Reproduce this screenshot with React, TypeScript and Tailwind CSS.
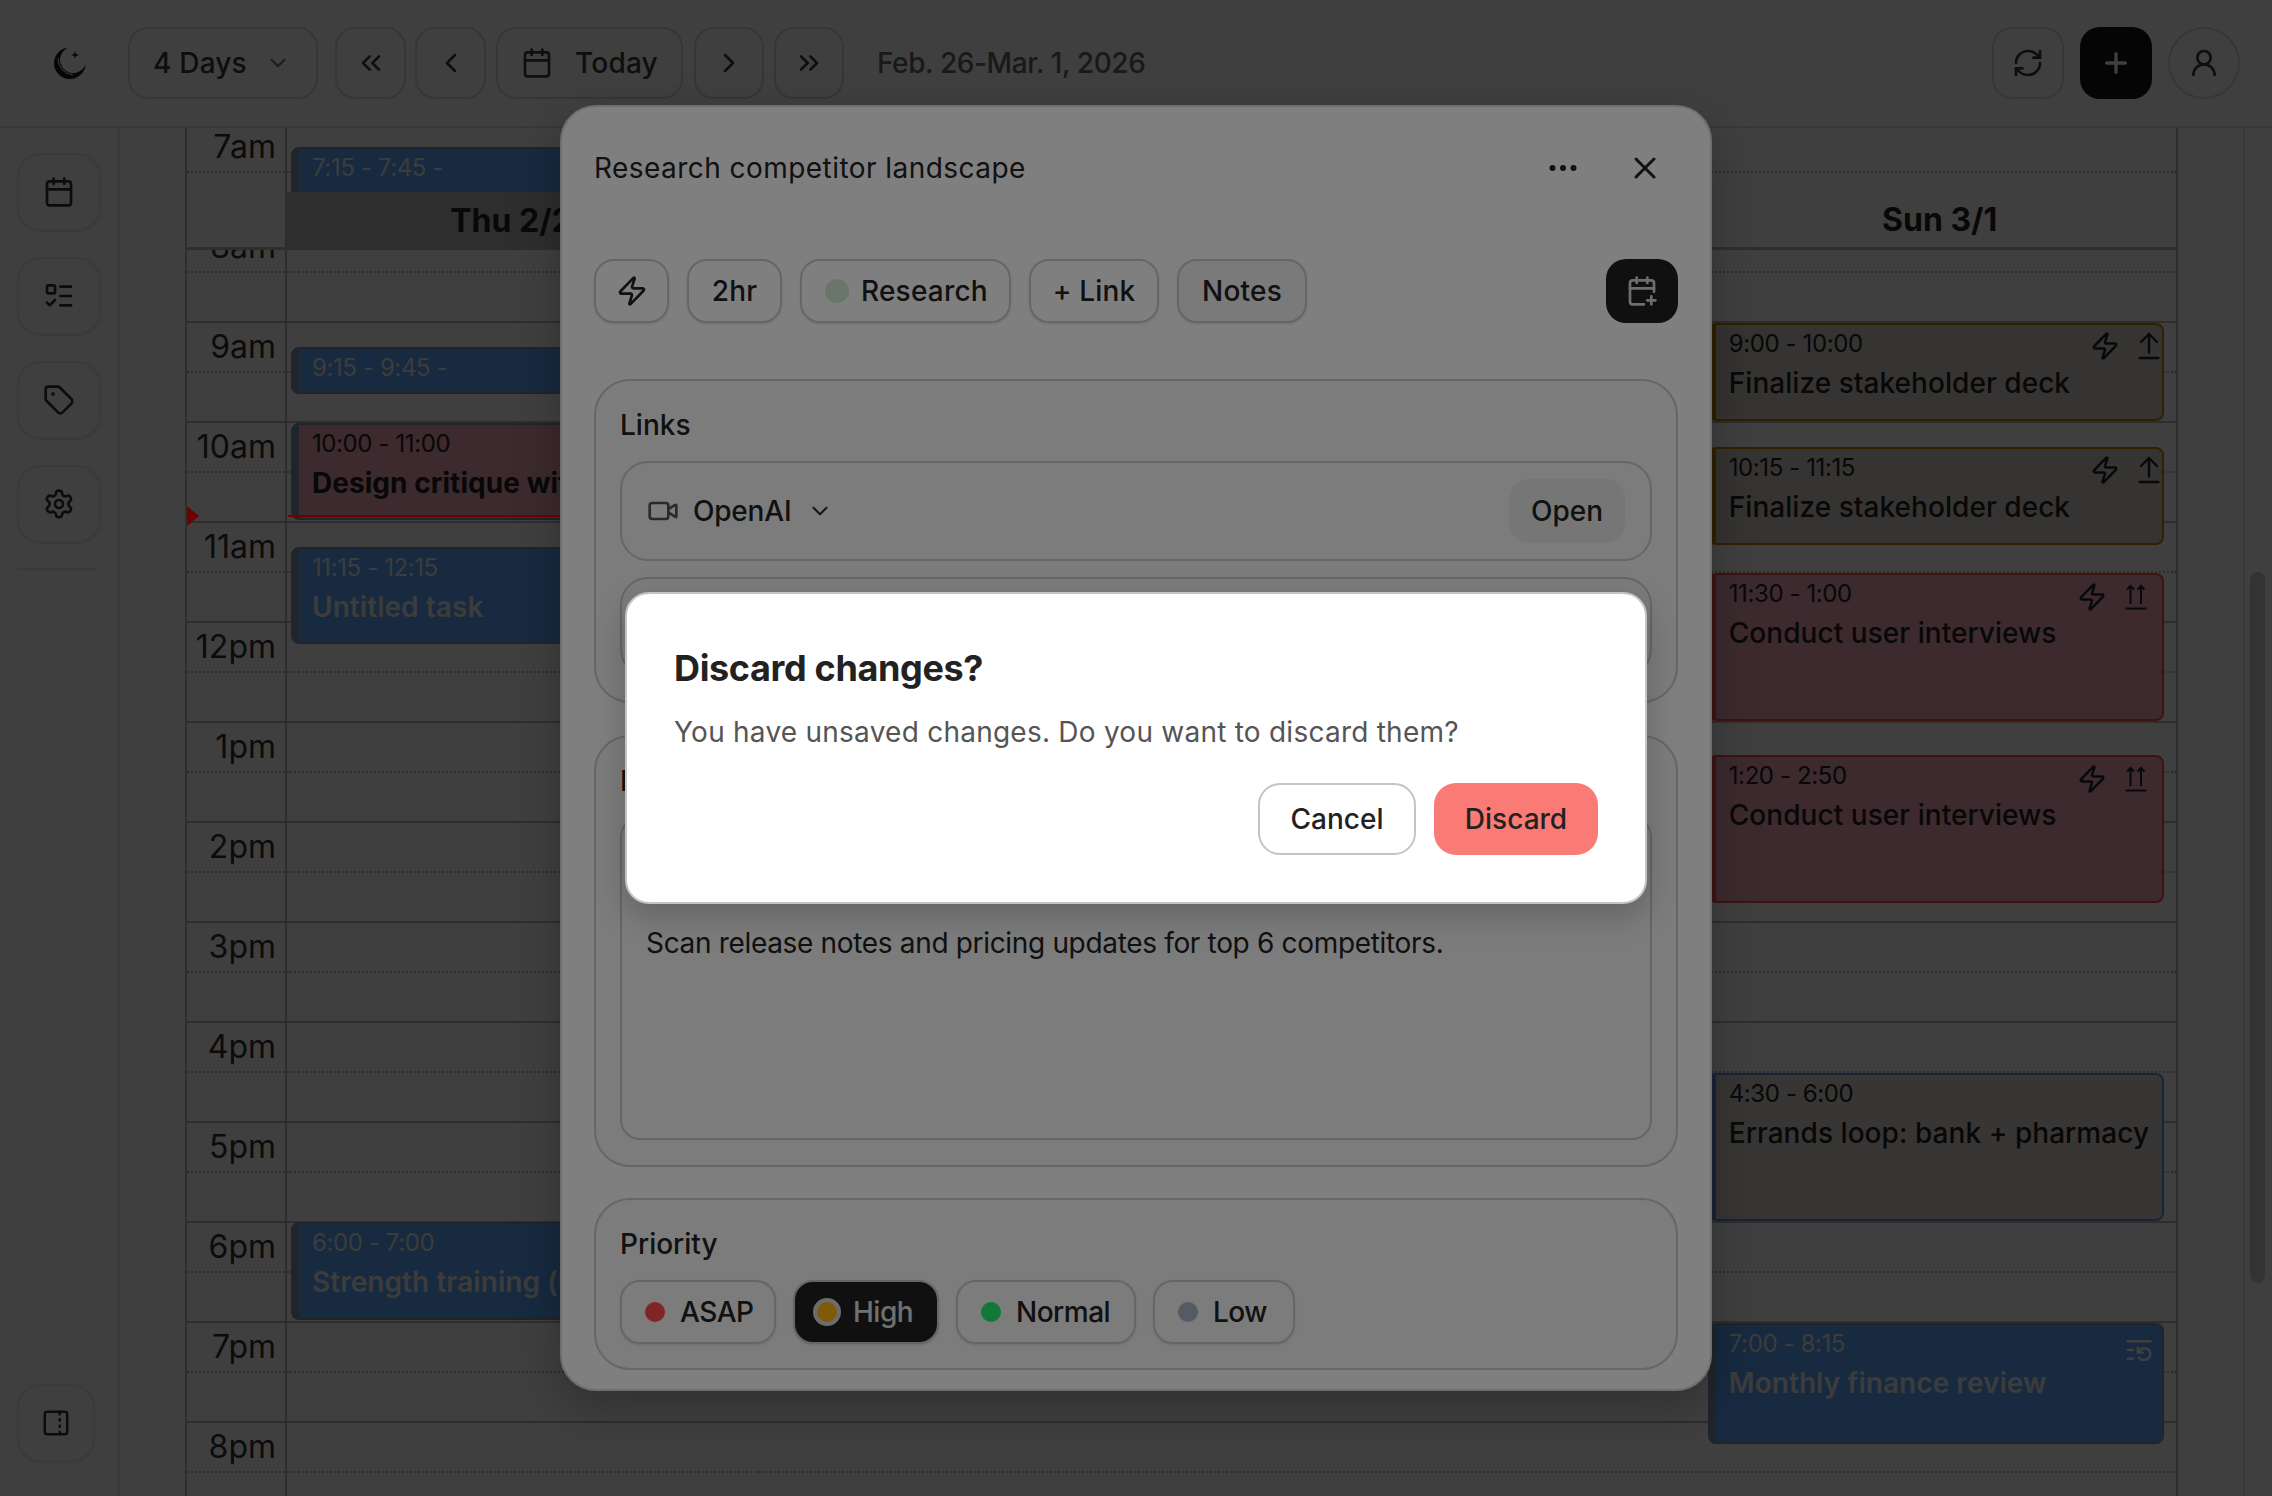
import {
  Calendar,
  CalendarPlus,
  ChevronDown,
  ChevronLeft,
  ChevronRight,
  ChevronsLeft,
  ChevronsRight,
  Ellipsis,
  ListRestart,
  ListTodo,
  PanelRightDashed,
  Plus,
  RefreshCw,
  Settings,
  Tag,
  UserRound,
  Video,
  X,
  Zap,
  ArrowUpFromLine,
} from 'lucide-react';
import type { ReactNode } from 'react';

const HOURS = ['7am', '8am', '9am', '10am', '11am', '12pm', '1pm', '2pm', '3pm', '4pm', '5pm', '6pm', '7pm', '8pm'];

type Kind = 'blue' | 'rose' | 'amber' | 'red' | 'plain';
type Task = {
  top: number;
  height: number;
  time: string;
  title?: string;
  kind: Kind;
  priority?: 'one' | 'two' | 'repeat';
};

const KIND_STYLES: Record<Kind, string> = {
  blue: 'bg-[#5ca8ff] border-[#8090b0] text-[#f0f0f0] font-semibold',
  rose: 'bg-[#f0a8b8] border-[#8090b0] text-[#222222] font-bold',
  amber: 'bg-[#d8d0c8] border-[#c08000] text-[#222222] font-medium',
  red: 'bg-[#f0a8b8] border-[#ff4a4a] text-[#222222] font-medium',
  plain: 'bg-[#dcd8d0] border-[#6090e0] text-[#222222] font-medium',
};

// tops are measured from the 7am line of the scrolled grid
const THU_TASKS: Task[] = [
  { top: 26, height: 100, time: '7:15 - 7:45 -', kind: 'blue' },
  { top: 226, height: 47, time: '9:15 - 9:45 -', kind: 'blue' },
  { top: 302, height: 97, time: '10:00 - 11:00', title: 'Design critique with product', kind: 'rose' },
  { top: 426, height: 97, time: '11:15 - 12:15', title: 'Untitled task', kind: 'blue' },
  { top: 1101, height: 98, time: '6:00 - 7:00', title: 'Strength training (upper body)', kind: 'blue' },
];

const SUN_TASKS: Task[] = [
  { top: 202, height: 98, time: '9:00 - 10:00', title: 'Finalize stakeholder deck', kind: 'amber', priority: 'one' },
  { top: 326, height: 98, time: '10:15 - 11:15', title: 'Finalize stakeholder deck', kind: 'amber', priority: 'one' },
  { top: 452, height: 148, time: '11:30 - 1:00', title: 'Conduct user interviews', kind: 'red', priority: 'two' },
  { top: 634, height: 148, time: '1:20 - 2:50', title: 'Conduct user interviews', kind: 'red', priority: 'two' },
  { top: 952, height: 148, time: '4:30 - 6:00', title: 'Errands loop: bank + pharmacy', kind: 'plain' },
  { top: 1202, height: 121, time: '7:00 - 8:15', title: 'Monthly finance review', kind: 'blue', priority: 'repeat' },
];

function MoonLogo() {
  return (
    <svg width="34" height="32" viewBox="0 0 34 32" aria-hidden="true">
      <path d="M16.5 .5A15.8 15.8 0 1 0 33.6 17.5 13.2 13.2 0 1 1 16.5 .5Z" fill="#1a1a1a" />
      <path d="M6 11Q6.5 25.5 21 28" fill="none" stroke="#ffffff" strokeWidth="1" />
      <path d="M23 4l1 2.9 2.9 1-2.9 1-1 2.9-1-2.9-2.9-1 2.9-1Z" fill="#1a1a1a" />
    </svg>
  );
}

function DoubleUp() {
  return (
    <svg width="24" height="26" viewBox="0 0 24 26" fill="none" stroke="currentColor" strokeWidth="2" aria-hidden="true">
      <path d="M1.5 24.5h21M6.5 20V2M3 5.5l3.5-3.5L10 5.5M17 20V2M13.5 5.5 17 2l3.5 3.5" />
    </svg>
  );
}

function TopButton({ children, className = '' }: { children: ReactNode; className?: string }) {
  return (
    <button className={`flex h-[72px] items-center justify-center rounded-[20px] border-2 border-[#d8d8d8] text-[#3a3a3a] ${className}`}>
      {children}
    </button>
  );
}

function SideButton({ children, className = 'w-[84px]' }: { children: ReactNode; className?: string }) {
  return (
    <button className={`flex h-[78px] items-center justify-center rounded-[24px] border-2 border-[#ebebeb] text-[#333333] shadow-sm ${className}`}>
      {children}
    </button>
  );
}

function Chip({ children, className = '' }: { children: ReactNode; className?: string }) {
  return (
    <button className={`flex h-[64px] items-center rounded-[20px] border-2 border-[#cccccc] text-[28px] font-medium tracking-[0.2px] text-[#222222] shadow-sm ${className}`}>
      {children}
    </button>
  );
}

function Card({ className = '', children }: { className?: string; children: ReactNode }) {
  return <section className={`rounded-[36px] border-2 border-[#cccccc] bg-[#f8f8f8] px-[24px] ${className}`}>{children}</section>;
}

function TaskBlock({ task }: { task: Task }) {
  return (
    <div
      className={`absolute right-[12px] left-[4px] overflow-hidden rounded-[8px] border-2 border-l-[8px] pl-[13px] ${KIND_STYLES[task.kind]}`}
      style={{ top: task.top, height: task.height }}
    >
      <p className="mt-[3px] text-[24px] leading-[32px] font-normal tracking-[-0.4px] whitespace-nowrap">{task.time}</p>
      {task.title && <p className="mt-[5px] text-[28px] leading-[36px] tracking-[0.05px] whitespace-nowrap">{task.title}</p>}
      {task.priority === 'one' && (
        <div className="absolute top-[5px] -right-[3px] flex items-center gap-[13px] text-[#222222]">
          <Zap size={30} strokeWidth={2} />
          <ArrowUpFromLine size={32} strokeWidth={1.8} />
        </div>
      )}
      {task.priority === 'two' && (
        <div className="absolute top-[7px] right-[14px] flex items-center gap-[17px] text-[#222222]">
          <Zap size={30} strokeWidth={2} />
          <DoubleUp />
        </div>
      )}
      {task.priority === 'repeat' && (
        <ListRestart className="absolute top-[10px] right-[8px] text-white" size={30} strokeWidth={2} />
      )}
    </div>
  );
}

function HourLines() {
  return (
    <>
      {HOURS.map((hour) => (
        <div key={hour} className="h-[100px] border-t-2 border-[#b8b8b8]">
          <div className="h-[50px] border-b-2 border-dotted border-[#b8b8b8]" />
        </div>
      ))}
    </>
  );
}

function DayColumn({ tasks = [] }: { tasks?: Task[] }) {
  return (
    <div className="relative flex-1 basis-0">
      <HourLines />
      {tasks.map((task) => (
        <TaskBlock key={task.time} task={task} />
      ))}
    </div>
  );
}

function TopBar() {
  return (
    <header className="flex h-[128px] items-center border-b-2 border-[#dddddd] pr-[32px] pl-[52px]">
      <MoonLogo />
      <TopButton className="ml-[42px] w-[190px] justify-start gap-[18px] pl-[23px]">
        <span className="text-[28px] font-medium tracking-[0.2px]">4 Days</span>
        <ChevronDown size={26} className="text-[#777777]" />
      </TopButton>
      <TopButton className="ml-[17px] w-[71px]"><ChevronsLeft size={32} /></TopButton>
      <TopButton className="ml-[9px] w-[71px]"><ChevronLeft size={32} /></TopButton>
      <TopButton className="ml-[10px] w-[187px] gap-[22px]">
        <Calendar size={32} />
        <span className="text-[28px] font-medium tracking-[0.2px]">Today</span>
      </TopButton>
      <TopButton className="ml-[11px] w-[70px]"><ChevronRight size={32} /></TopButton>
      <TopButton className="ml-[10px] w-[70px]"><ChevronsRight size={32} /></TopButton>
      <span className="ml-[33px] text-[28px] font-medium tracking-[-0.4px] text-[#666666]">Feb. 26-Mar. 1, 2026</span>
      <div className="ml-auto flex items-center gap-[16px]">
        <TopButton className="w-[72px]"><RefreshCw size={32} /></TopButton>
        <button className="flex h-[72px] w-[72px] items-center justify-center rounded-[20px] bg-[#141414] text-white">
          <Plus size={32} strokeWidth={2.5} />
        </button>
        <TopButton className="w-[72px] rounded-full"><UserRound size={32} /></TopButton>
      </div>
    </header>
  );
}

function Sidebar() {
  return (
    <aside className="flex w-[120px] flex-col border-r-2 border-[#e4e4e4] pt-[25px] pl-[17px]">
      <div className="flex flex-col gap-[26px]">
        <SideButton><Calendar size={32} /></SideButton>
        <SideButton><ListTodo size={32} /></SideButton>
        <SideButton><Tag size={32} /></SideButton>
        <SideButton><Settings size={32} /></SideButton>
      </div>
      <div className="mt-[25px] h-[2px] w-[80px] bg-[#e4e4e4]" />
      <SideButton className="mt-auto mb-[34px] w-[78px]"><PanelRightDashed size={30} /></SideButton>
    </aside>
  );
}

function Calendar4Days() {
  return (
    <div className="relative flex-1 overflow-hidden border-x-2 border-[#b8b8b8]">
      <div className="-mt-[7px] flex">
        <div className="w-[100px] border-r-2 border-[#b8b8b8]">
          {HOURS.map((hour) => (
            <div key={hour} className="relative h-[100px] border-t-2 border-[#b8b8b8]">
              <div className="h-[50px] border-b-2 border-dotted border-[#b8b8b8]" />
              <span className="absolute top-[4px] right-[9px] text-[32px] leading-[40px] text-[#303030]">{hour}</span>
            </div>
          ))}
        </div>
        <DayColumn tasks={THU_TASKS} />
        <DayColumn />
        <DayColumn />
        <DayColumn tasks={SUN_TASKS} />
      </div>

      <div className="absolute top-[64px] right-0 left-0 flex h-[58px]">
        <div className="w-[98px] border-b-[3px] border-[#b8b8b8] bg-white" />
        <div className="flex flex-1 basis-0 items-center justify-center bg-[#b8b8b8] text-[32px] font-bold text-[#222222]">Thu 2/26</div>
        <div className="flex flex-1 basis-0 items-center justify-center bg-white text-[32px] font-bold text-[#222222]">Fri 2/27</div>
        <div className="flex flex-1 basis-0 items-center justify-center bg-white text-[32px] font-bold text-[#222222]">Sat 2/28</div>
        <div className="flex flex-1 basis-0 items-center justify-center border-b-[3px] border-[#b8b8b8] bg-white text-[32px] font-bold text-[#222222]">Sun 3/1</div>
      </div>

      {/* now marker sits above the first scrim */}
      <div className="absolute top-[378px] left-0 z-20 h-0 w-0 border-y-[10px] border-l-[12px] border-y-transparent border-l-[#e00000]" />
      <div className="absolute top-[387px] left-[101px] z-20 h-[2px] w-[472px] bg-[#e00000]" />
    </div>
  );
}

function PriorityChip({ label, dot, className }: { label: string; dot: string; className: string }) {
  return (
    <Chip className={`gap-[15px] pl-[23px] !tracking-[-0.5px] ${className}`}>
      <span className={`h-[20px] w-[20px] rounded-full ${dot}`} />
      {label}
    </Chip>
  );
}

function TaskModal() {
  return (
    <div className="flex h-[1286px] w-[1152px] flex-col rounded-[36px] border-2 border-[#dddddd] bg-white px-[32px] shadow-[0_16px_48px_rgba(0,0,0,0.25)]">
      <div className="mt-[43px] flex h-[36px] items-center text-[#222222]">
        <h2 className="text-[28px] tracking-[0.45px]">Research competitor landscape</h2>
        <Ellipsis className="ml-auto" size={36} />
        <X className="mr-[15px] ml-[46px]" size={36} />
      </div>

      <div className="mt-[73px] flex items-center gap-[18px]">
        <Chip className="w-[75px] justify-center"><Zap size={32} /></Chip>
        <Chip className="w-[95px] justify-center">2hr</Chip>
        <Chip className="w-[211px] gap-[12px] pl-[23px]">
          <span className="h-[24px] w-[24px] rounded-full bg-[#d4ecd4]" />
          Research
        </Chip>
        <Chip className="w-[130px] justify-center">+ Link</Chip>
        <Chip className="w-[130px] justify-center bg-[#f4f4f4]">Notes</Chip>
        <button className="ml-auto flex h-[64px] w-[72px] items-center justify-center rounded-[20px] bg-[#202020] text-[#dddddd]">
          <CalendarPlus size={32} />
        </button>
      </div>

      <Card className="mt-[56px] h-[324px] pt-[26px]">
        <h3 className="text-[28px] leading-[36px] font-medium text-[#222222]">Links</h3>
        <div className="mt-[18px] flex h-[100px] items-center rounded-[28px] border-2 border-[#cccccc] pr-[25px] pl-[25px]">
          <Video size={32} className="text-[#555555]" />
          <span className="ml-[14px] text-[28px] font-medium tracking-[-0.2px] text-[#222222]">OpenAI</span>
          <ChevronDown size={26} className="ml-[16px] text-[#333333]" />
          <button className="ml-auto h-[64px] w-[116px] rounded-[20px] bg-[#ececec] text-[28px] font-medium text-[#222222]">Open</button>
        </div>
        <div className="mt-[16px] h-[100px] rounded-[28px] border-2 border-[#cccccc]" />
      </Card>

      <Card className="mt-[32px] h-[432px] pt-[26px]">
        <h3 className="text-[28px] leading-[36px] font-medium text-[#222222]">Notes</h3>
        <div className="mt-[18px] h-[323px] rounded-[20px] border-2 border-[#cccccc] pt-[106px] pl-[24px]">
          <p className="text-[28px] leading-[36px] tracking-[-0.33px] text-[#222222]">Scan release notes and pricing updates for top 6 competitors.</p>
        </div>
      </Card>

      <Card className="mt-[31px] h-[172px] pt-[26px]">
        <h3 className="text-[28px] leading-[36px] font-medium text-[#222222]">Priority</h3>
        <div className="mt-[18px] flex gap-[17px]">
          <PriorityChip label="ASAP" dot="bg-[#ff4a4a]" className="w-[156px]" />
          <Chip className="w-[146px] gap-[12px] border-[#202020] bg-[#202020] pl-[18px] !tracking-[-0.5px] text-[#e0e0e0]">
            <span className="h-[28px] w-[28px] rounded-full border-4 border-[#d8d8d8] bg-[#ffb414]" />
            High
          </Chip>
          <PriorityChip label="Normal" dot="bg-[#22f070]" className="w-[180px]" />
          <PriorityChip label="Low" dot="bg-[#acb4c8]" className="w-[142px]" />
        </div>
      </Card>
    </div>
  );
}

function DiscardDialog() {
  return (
    <div className="w-[1022px] rounded-[24px] border-2 border-[#c4c4c4] bg-white px-[47px] pt-[50px] pb-[47px] shadow-[0_12px_32px_rgba(0,0,0,0.2)]">
      <h2 className="text-[36px] leading-[48px] font-bold tracking-[-0.35px] text-[#222222]">Discard changes?</h2>
      <p className="mt-[22px] text-[28px] leading-[36px] tracking-[0.24px] text-[#555555]">You have unsaved changes. Do you want to discard them?</p>
      <div className="mt-[33px] flex justify-end gap-[18px]">
        <button className="h-[72px] w-[158px] rounded-[22px] border-2 border-[#c4c4c4] text-[28px] font-medium text-[#222222]">Cancel</button>
        <button className="h-[72px] w-[164px] rounded-[22px] bg-[#fa7a75] text-[28px] font-medium text-[#222222]">Discard</button>
      </div>
    </div>
  );
}

export default function App() {
  return (
    <div className="relative h-[1496px] w-[2272px] overflow-hidden bg-white font-['Inter','Liberation_Sans',sans-serif]">
      <TopBar />
      <main className="flex h-[1368px]">
        <Sidebar />
        <div className="w-[65px]" />
        <Calendar4Days />
        <div className="w-[65px]" />
        <div className="w-[29px] border-l-2 border-[#e4e4e4] pl-[5px]">
          <div className="mt-[444px] h-[711px] w-[15px] rounded-full bg-[#cccccc]" />
        </div>
      </main>

      <div className="absolute inset-0 z-10 bg-black/50" />
      <div className="absolute inset-0 z-30 flex items-center justify-center">
        <TaskModal />
      </div>
      <div className="absolute inset-0 z-40 bg-black/50" />
      <div className="absolute inset-0 z-50 flex items-center justify-center">
        <DiscardDialog />
      </div>
    </div>
  );
}
